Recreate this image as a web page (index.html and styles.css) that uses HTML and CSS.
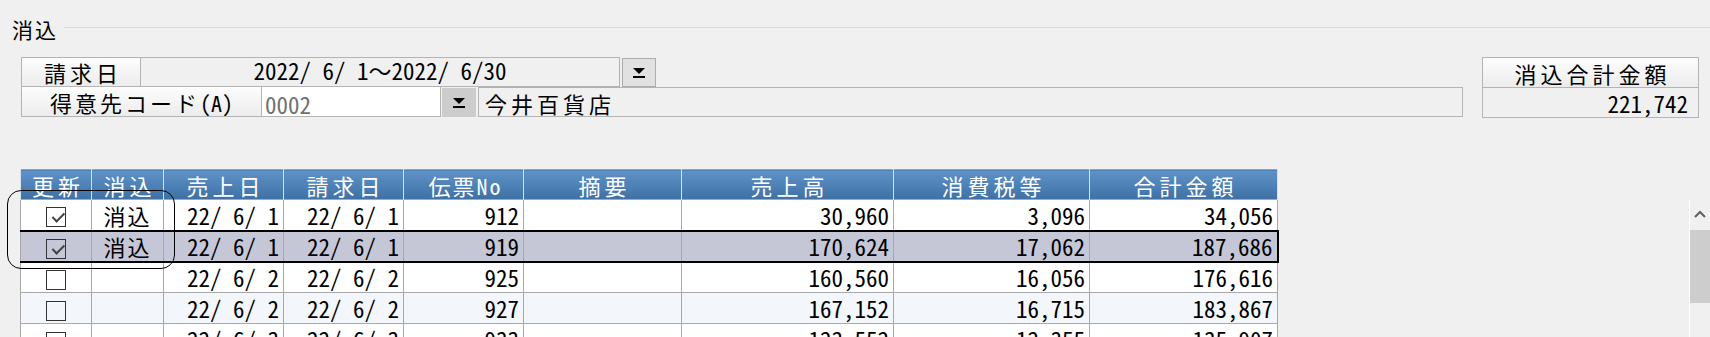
FILE: index.html
```html
<!DOCTYPE html>
<html lang="ja">
<head>
  <meta charset="UTF-8" />
  <title>消込</title>
  <link rel="stylesheet" href="styles.css">
</head>
<body>
  <div class="group-title">
    <span>消込</span>
    <div class="group-line"></div>
  </div>

  <div class="filter">
    <div class="filter-left">
      <div class="frow">
        <div class="label w120">請求日</div>
        <div class="field date">2022/&nbsp;6/&nbsp;1～2022/&nbsp;6/30</div>
        <div class="drop drop-light">
          <svg width="14" height="10" viewBox="0 0 14 10"><path d="M1 0 H13 L7 6 Z" fill="#000"/><rect x="1" y="8" width="12" height="2" fill="#000"/></svg>
        </div>
      </div>
      <div class="frow">
        <div class="label w240">得意先コード<span class="paren">(A)</span></div>
        <div class="field code">0002</div>
        <div class="drop drop-dark">
          <svg width="14" height="10" viewBox="0 0 14 10"><path d="M1 0 H13 L7 6 Z" fill="#000"/><rect x="1" y="8" width="12" height="2" fill="#000"/></svg>
        </div>
        <div class="field name">今井百貨店</div>
      </div>
    </div>
    <div class="total">
      <div class="label total-label">消込合計金額</div>
      <div class="field total-value">221,742</div>
    </div>
  </div>

  <div class="grid-area">
    <div class="table-wrap">
      <table class="grid">
        <colgroup>
          <col style="width:71px"><col style="width:72px"><col style="width:120px">
          <col style="width:120px"><col style="width:120px"><col style="width:158px">
          <col style="width:212px"><col style="width:196px"><col style="width:188px">
        </colgroup>
        <thead>
          <tr>
            <th>更新</th><th>消込</th><th>売上日</th><th>請求日</th><th class="tight">伝票No</th>
            <th>摘要</th><th>売上高</th><th>消費税等</th><th>合計金額</th>
          </tr>
        </thead>
        <tbody>
          <tr>
            <td class="c"><span class="chk on"></span></td><td class="c">消込</td>
            <td>22/&nbsp;6/&nbsp;1</td><td>22/&nbsp;6/&nbsp;1</td><td>912</td><td></td>
            <td>30,960</td><td>3,096</td><td>34,056</td>
          </tr>
          <tr class="sel">
            <td class="c"><span class="chk on"></span></td><td class="c">消込</td>
            <td>22/&nbsp;6/&nbsp;1</td><td>22/&nbsp;6/&nbsp;1</td><td>919</td><td></td>
            <td>170,624</td><td>17,062</td><td>187,686</td>
          </tr>
          <tr>
            <td class="c"><span class="chk"></span></td><td class="c"></td>
            <td>22/&nbsp;6/&nbsp;2</td><td>22/&nbsp;6/&nbsp;2</td><td>925</td><td></td>
            <td>160,560</td><td>16,056</td><td>176,616</td>
          </tr>
          <tr class="alt">
            <td class="c"><span class="chk"></span></td><td class="c"></td>
            <td>22/&nbsp;6/&nbsp;2</td><td>22/&nbsp;6/&nbsp;2</td><td>927</td><td></td>
            <td>167,152</td><td>16,715</td><td>183,867</td>
          </tr>
          <tr>
            <td class="c"><span class="chk"></span></td><td class="c"></td>
            <td>22/&nbsp;6/&nbsp;3</td><td>22/&nbsp;6/&nbsp;3</td><td>933</td><td></td>
            <td>123,552</td><td>12,355</td><td>135,907</td>
          </tr>
        </tbody>
      </table>
      <div class="mark"></div>
    </div>

    <div class="vscroll">
      <div class="arrow">
        <svg width="12" height="8" viewBox="0 0 12 8"><path d="M1 7 L6 2 L11 7" fill="none" stroke="#606060" stroke-width="2"/></svg>
      </div>
      <div class="thumb"></div>
    </div>
  </div>
</body>
</html>
```

FILE: styles.css
```css
* {
  margin: 0;
  padding: 0;
  box-sizing: border-box;
}

html, body {
  width: 100%;
  height: 100%;
  overflow: hidden;
  background-color: #f0f0f0;
  font-family: "Noto Sans Mono CJK JP", "Noto Sans CJK JP", monospace;
  color: #000;
}

.group-title {
  display: flex;
  align-items: center;
  height: 40px;
  padding: 18px 0 0 12px;
  font-size: 21px;
  letter-spacing: 2px;
}

.group-line {
  flex: 1;
  height: 1px;
  margin-left: 6px;
  margin-top: -4px;
  background: #d8d8d8;
}

.filter {
  display: flex;
  margin-top: 17px;
  padding-left: 21px;
  padding-right: 11px;
  font-size: 23px;
  line-height: 26px;
}

.filter-left {
  display: flex;
  flex-direction: column;
}

.frow {
  display: flex;
  height: 30px;
}

.label {
  display: flex;
  align-items: center;
  justify-content: center;
  border: 1px solid #b4b4b4;
  background: linear-gradient(#fdfdfd, #ececec);
  font-size: 22px;
  letter-spacing: 4px;
  padding-left: 4px;
}

.label .paren {
  letter-spacing: 0;
}

.frow + .frow .label {
  border-top: none;
}

.w120 { width: 120px; }
.w240 { width: 241px; letter-spacing: 3px; padding-left: 0; }

.field {
  display: flex;
  align-items: center;
  border: 1px solid #b4b4b4;
  background: #f0f0f0;
  height: 100%;
}

.date {
  width: 480px;
  margin-left: -1px;
  justify-content: center;
  padding-bottom: 4px;
}

.code {
  width: 180px;
  margin-left: -1px;
  padding-left: 3px;
  padding-top: 4px;
  background: #fff;
  color: #707070;
  border-top: none;
}

.name {
  width: 985px;
  margin-left: 2px;
  padding-left: 6px;
  padding-top: 2px;
  font-size: 22px;
  letter-spacing: 4px;
}

.drop {
  display: flex;
  align-items: center;
  justify-content: center;
  width: 34px;
}

.drop-light {
  height: 29px;
  margin: 1px 0 0 2px;
  background: #e1e1e1;
  border: 1px solid #adadad;
}

.drop-dark {
  margin-left: 1px;
  margin-top: 1px;
  background: #cccccc;
}

.total {
  display: flex;
  flex-direction: column;
  width: 217px;
  margin-left: auto;
}

.total-label {
  height: 31px;
}

.total-value {
  height: 31px;
  margin-top: -1px;
  justify-content: flex-end;
  padding-right: 10px;
}

.grid-area {
  display: flex;
  margin-top: 51px;
}

.table-wrap {
  position: relative;
  margin-left: 20px;
}

.grid {
  border-collapse: collapse;
  table-layout: fixed;
  width: 1257px;
  font-size: 23px;
  border: 1px solid #a0a0a0;
}

.grid th {
  height: 30px;
  color: #fff;
  font-size: 22px;
  font-weight: normal;
  letter-spacing: 4px;
  padding-left: 4px;
  background: linear-gradient(#5f93c8, #3e70a4);
  border-left: 1px solid #d4e0ec;
  border-right: 1px solid #d4e0ec;
  text-align: center;
  line-height: 26px;
}

.grid th.tight {
  letter-spacing: 2px;
}

.grid td {
  height: 31px;
  background: #fff;
  border: 1px solid #a8a8a8;
  text-align: right;
  padding-right: 4px;
  line-height: 28px;
  white-space: pre;
}

.grid td.c {
  text-align: center;
  padding-right: 0;
  font-size: 22px;
  letter-spacing: 2px;
}

.grid tr.alt td {
  background: #f3f6fb;
}

.grid tr.sel td {
  background: #c5c7d7;
  border-top: 2px solid #000;
  border-bottom: 2px solid #000;
}

.grid tr.sel td:last-child {
  border-right: 2px solid #000;
}

.chk {
  display: inline-block;
  width: 20px;
  height: 20px;
  border: 1px solid #333;
  vertical-align: middle;
  position: relative;
  margin-top: -3px;
}

.chk.on::after {
  content: "";
  position: absolute;
  left: 4px;
  top: 3px;
  width: 10px;
  height: 5px;
  border-left: 2px solid #444;
  border-bottom: 2px solid #444;
  transform: rotate(-45deg) translate(0, 2px);
}

.mark {
  position: absolute;
  left: -13px;
  top: 21px;
  width: 168px;
  height: 79px;
  border: 1px solid #000;
  border-radius: 14px;
  pointer-events: none;
}

.vscroll {
  width: 21px;
  margin-left: auto;
  margin-top: 31px;
  border-left: 1px solid #fff;
  display: flex;
  flex-direction: column;
}

.arrow {
  height: 30px;
  display: flex;
  justify-content: center;
  padding-top: 10px;
}

.thumb {
  height: 73px;
  background: #cdcdcd;
}
```
